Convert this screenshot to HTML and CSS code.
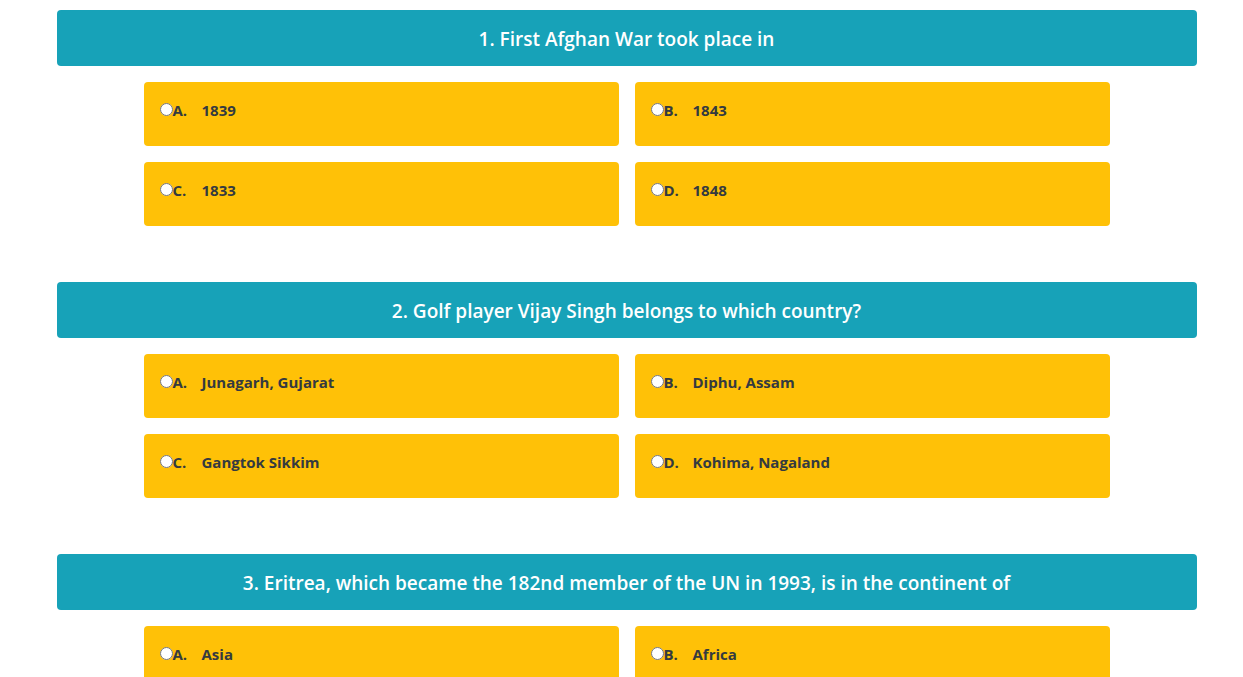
FILE: index.html
```html
<!DOCTYPE html>
<html>
<head>
<meta charset="utf-8">
<link rel="stylesheet" href="styles.css">
</head>
<body>
<div class="container">
  <section class="question">
    <h2 class="q-title">1. First Afghan War took place in</h2>
    <div class="options">
      <label class="option"><input type="radio" name="q1"><span class="letter">A.</span><span class="answer">1839</span></label>
      <label class="option"><input type="radio" name="q1"><span class="letter">B.</span><span class="answer">1843</span></label>
      <label class="option"><input type="radio" name="q1"><span class="letter">C.</span><span class="answer">1833</span></label>
      <label class="option"><input type="radio" name="q1"><span class="letter">D.</span><span class="answer">1848</span></label>
    </div>
  </section>
  <section class="question">
    <h2 class="q-title">2. Golf player Vijay Singh belongs to which country?</h2>
    <div class="options">
      <label class="option"><input type="radio" name="q2"><span class="letter">A.</span><span class="answer">Junagarh, Gujarat</span></label>
      <label class="option"><input type="radio" name="q2"><span class="letter">B.</span><span class="answer">Diphu, Assam</span></label>
      <label class="option"><input type="radio" name="q2"><span class="letter">C.</span><span class="answer">Gangtok Sikkim</span></label>
      <label class="option"><input type="radio" name="q2"><span class="letter">D.</span><span class="answer">Kohima, Nagaland</span></label>
    </div>
  </section>
  <section class="question">
    <h2 class="q-title">3. Eritrea, which became the 182nd member of the UN in 1993, is in the continent of</h2>
    <div class="options">
      <label class="option"><input type="radio" name="q3"><span class="letter">A.</span><span class="answer">Asia</span></label>
      <label class="option"><input type="radio" name="q3"><span class="letter">B.</span><span class="answer">Africa</span></label>
      <label class="option"><input type="radio" name="q3"><span class="letter">C.</span><span class="answer">Europe</span></label>
      <label class="option"><input type="radio" name="q3"><span class="letter">D.</span><span class="answer">Australia</span></label>
    </div>
  </section>
</div>
</body>
</html>
```
FILE: styles.css
```css
* { box-sizing: border-box; }
html, body { margin: 0; padding: 0; background: #fff; }
body {
  font-family: "Open Sans", "Noto Sans", sans-serif;
  color: #343a40;
  padding-left: 10px;
}
.container {
  width: 1140px;
  margin: 0 auto;
  padding-top: 10px;
}
.question { margin-bottom: 56px; }
.q-title {
  margin: 0;
  height: 56px;
  padding-top: 1px;
  background: #17a2b8;
  color: #fff;
  border-radius: 4px;
  font-size: 19px;
  font-weight: 600;
  line-height: 56px;
  text-align: center;
}
.options {
  width: 966px;
  margin: 16px auto 0;
  display: grid;
  grid-template-columns: 475px 475px;
  gap: 16px;
}
.option {
  height: 64px;
  background: #ffc107;
  border-radius: 4px;
  padding: 16px 16px 0 16px;
  display: flex;
  align-items: flex-start;
  font-size: 15px;
  font-weight: 700;
  line-height: 24px;
  color: #343a40;
}
.option input {
  margin: 5px 0 0 0;
  width: 13px;
  height: 13px;
}
.letter { width: 29px; }
```
